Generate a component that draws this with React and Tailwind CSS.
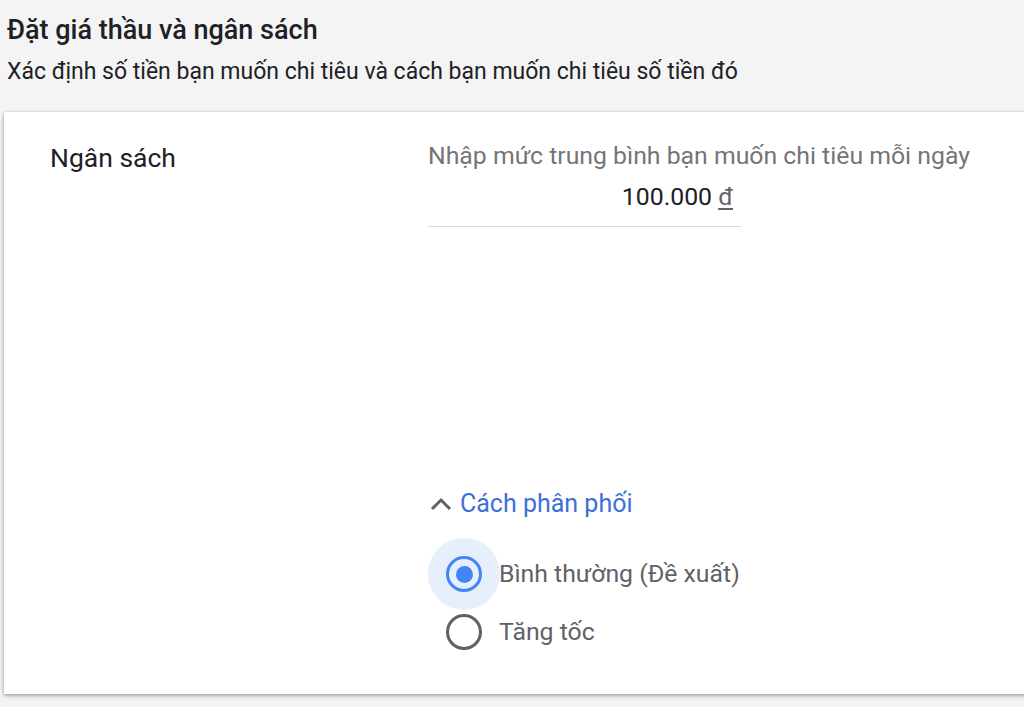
export default function App() {
  return (
    <div className="min-h-[707px] w-[1024px] overflow-hidden bg-[#f4f4f4] font-['Roboto',sans-serif]">
      {/* Tiêu đề */}
      <div className="pl-[7px] pt-[14px]">
        <h1 className="text-[27px] font-medium leading-[32px] text-[#202124]">Đặt giá thầu và ngân sách</h1>
        <p className="mt-[12px] text-[23px] leading-[28px] text-[#202124]">
          Xác định số tiền bạn muốn chi tiêu và cách bạn muốn chi tiêu số tiền đó
        </p>
      </div>

      {/* Thẻ */}
      <div className="ml-[4px] mt-[26px] h-[582px] w-[1040px] bg-white shadow-[0_1px_3px_rgba(0,0,0,0.3),0_2px_6px_rgba(0,0,0,0.15)]">
        <div className="flex pl-[46px] pt-[30px]">
          <div className="w-[378px] text-[26.5px] leading-[32px] text-[#202124]">Ngân sách</div>

          <div className="flex flex-col">
            <div className="whitespace-nowrap text-[24.8px] leading-[28px] text-[#757575]">
              Nhập mức trung bình bạn muốn chi tiêu mỗi ngày
            </div>
            <div className="w-[313px] border-b border-[#dadce0] pb-[14px] pt-[13px] text-right">
              <span className="pr-[8px] text-[24.8px] leading-[28px] text-[#202124]">
                100.000 <span className="text-[#5f6368] underline underline-offset-[3px]">đ</span>
              </span>
            </div>

            {/* Cách phân phối */}
            <button className="mt-[262px] flex h-[30px] items-center text-left">
              <svg width="22" height="14" viewBox="0 0 22 14" className="ml-[2px] text-[#5f6368]">
                <polyline points="2,12 11,3 20,12" fill="none" stroke="currentColor" strokeWidth="3" />
              </svg>
              <span className="ml-[8px] text-[25px] leading-[30px] text-[#3c6fd8]">Cách phân phối</span>
            </button>

            <div className="mt-[19px] flex flex-col">
              <label className="flex items-center">
                <span className="flex h-[72px] w-[72px] items-center justify-center rounded-full bg-[#e8effc]">
                  <span className="flex h-[36px] w-[36px] items-center justify-center rounded-full border-[3.5px] border-[#4285f4]">
                    <span className="h-[17px] w-[17px] rounded-full bg-[#4285f4]" />
                  </span>
                </span>
                <span className="-ml-[1px] text-[24.8px] leading-[30px] text-[#5f6368]">Bình thường (Đề xuất)</span>
              </label>
              <label className="-mt-[14px] flex items-center">
                <span className="flex h-[72px] w-[72px] items-center justify-center">
                  <span className="h-[36px] w-[36px] rounded-full border-[3.5px] border-[#616161]" />
                </span>
                <span className="-ml-[1px] text-[24.8px] leading-[30px] text-[#5f6368]">Tăng tốc</span>
              </label>
            </div>
          </div>
        </div>
      </div>
    </div>
  );
}
